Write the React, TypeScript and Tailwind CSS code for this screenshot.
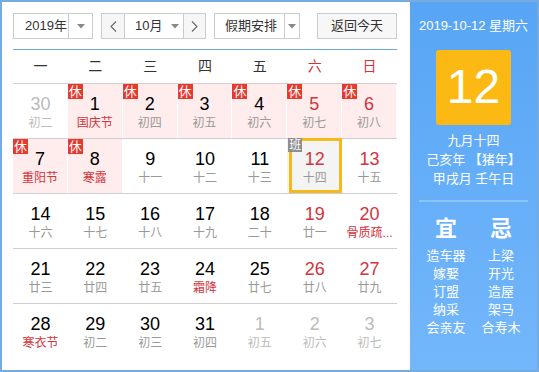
type Day = {
  d: number;
  l: string;
  out?: boolean;
  hol?: boolean;
  fest?: boolean;
  wk?: boolean;
  today?: boolean;
  ban?: boolean;
};

const weeks: Day[][] = [
  [
    { d: 30, l: "初二", out: true },
    { d: 1, l: "国庆节", hol: true, fest: true },
    { d: 2, l: "初四", hol: true },
    { d: 3, l: "初五", hol: true },
    { d: 4, l: "初六", hol: true },
    { d: 5, l: "初七", hol: true, wk: true },
    { d: 6, l: "初八", hol: true, wk: true },
  ],
  [
    { d: 7, l: "重阳节", hol: true, fest: true },
    { d: 8, l: "寒露", hol: true, fest: true },
    { d: 9, l: "十一" },
    { d: 10, l: "十二" },
    { d: 11, l: "十三" },
    { d: 12, l: "十四", wk: true, today: true, ban: true },
    { d: 13, l: "十五", wk: true },
  ],
  [
    { d: 14, l: "十六" },
    { d: 15, l: "十七" },
    { d: 16, l: "十八" },
    { d: 17, l: "十九" },
    { d: 18, l: "二十" },
    { d: 19, l: "廿一", wk: true },
    { d: 20, l: "骨质疏...", wk: true, fest: true },
  ],
  [
    { d: 21, l: "廿三" },
    { d: 22, l: "廿四" },
    { d: 23, l: "廿五" },
    { d: 24, l: "霜降", fest: true },
    { d: 25, l: "廿七" },
    { d: 26, l: "廿八", wk: true },
    { d: 27, l: "廿九", wk: true },
  ],
  [
    { d: 28, l: "寒衣节", fest: true },
    { d: 29, l: "初二" },
    { d: 30, l: "初三" },
    { d: 31, l: "初四" },
    { d: 1, l: "初五", out: true },
    { d: 2, l: "初六", out: true },
    { d: 3, l: "初七", out: true },
  ],
];

const yi = ["造车器", "嫁娶", "订盟", "纳采", "会亲友"];
const ji = ["上梁", "开光", "造屋", "架马", "合寿木"];

function Caret() {
  return (
    <svg width="8" height="5" viewBox="0 0 8 5">
      <path d="M0 0h8L4 4.5z" fill="#888" />
    </svg>
  );
}

function Chevron({ left }: { left?: boolean }) {
  return (
    <svg width="7" height="11" viewBox="0 0 7 11">
      <path
        d={left ? "M6 0.5L1 5.5l5 5" : "M1 0.5l5 5-5 5"}
        fill="none"
        stroke="#666"
        strokeWidth="1.1"
      />
    </svg>
  );
}

function Cell({ day }: { day: Day }) {
  const numColor = day.out ? "text-[#bbb]" : day.wk ? "text-[#d2343d]" : "text-black";
  const lunarColor = day.out ? "text-[#bbb]" : day.fest ? "text-[#d2343d]" : "text-[#999]";
  return (
    <div className="relative h-[54px]">
      <div
        className={`h-full flex flex-col items-center pt-[10px] ${
          day.hol ? "bg-[#ffecec] mr-px" : ""
        } ${day.today ? "bg-[#f4f4f4]" : ""}`}
      >
        <span className={`text-[18px] leading-[20px] ${numColor}`}>{day.d}</span>
        <span className={`text-[12px] leading-[16px] mt-px whitespace-nowrap ${lunarColor}`}>{day.l}</span>
      </div>
      {day.today && (
        <div className="absolute -top-px bottom-0 left-[2px] right-0 border-[3px] border-[#f6b91a]" />
      )}
      {day.hol && (
        <span className="absolute top-0 left-0 w-[15px] h-[15px] bg-[#e8392f] text-white text-[13px] leading-[15px] text-center">
          休
        </span>
      )}
      {day.ban && (
        <span className="absolute -top-px left-[1px] w-[14px] h-[14px] bg-[#8e8e8e] text-white text-[12px] leading-[14px] text-center">
          班
        </span>
      )}
    </div>
  );
}

export default function App() {
  return (
    <div className="w-[539px] h-[372px] border-2 border-[#76abe0] flex bg-white font-['Liberation_Sans','Noto_Sans_CJK_SC',sans-serif] text-[#333]">
      <div className="w-[408px] pl-[11px] pt-[11px]">
        <div className="flex h-[26px] text-[13px] w-[384px]">
          <div className="w-[80px] flex border border-[#ccc]">
            <span className="flex-1 pl-[11px] leading-[24px]">2019年</span>
            <span className="w-[24px] border-l border-[#ccc] flex items-center justify-center">
              <Caret />
            </span>
          </div>
          <div className="ml-[8px] w-[105px] flex border border-[#ccc]">
            <span className="w-[22px] bg-[#f6f6f6] flex items-center justify-center">
              <Chevron left />
            </span>
            <span className="w-[60px] border-x border-[#ccc] flex items-center pl-[10px] gap-[9px]">
              <span className="leading-[24px]">10月</span>
              <Caret />
            </span>
            <span className="flex-1 bg-[#f6f6f6] flex items-center justify-center">
              <Chevron />
            </span>
          </div>
          <div className="ml-[8px] w-[86px] flex border border-[#ccc]">
            <span className="flex-1 pl-[10px] leading-[24px] overflow-hidden whitespace-nowrap">假期安排</span>
            <span className="w-[15px] border-l border-[#ccc] flex items-center justify-center">
              <Caret />
            </span>
          </div>
          <div className="ml-auto w-[80px] border border-[#ccc] bg-[#f7f7f7] text-center leading-[24px]">
            返回今天
          </div>
        </div>

        <div className="w-[384px] mt-[10px] border-t border-[#6aa7dc]">
          <div className="grid grid-cols-7 h-[33px] items-center text-center text-[14px]">
            {["一", "二", "三", "四", "五", "六", "日"].map((w, i) => (
              <span key={w} className={i > 4 ? "text-[#d2343d]" : "text-[#333]"}>
                {w}
              </span>
            ))}
          </div>
          {weeks.map((row, r) => (
            <div key={r} className="grid grid-cols-7 border-t border-[#cfcfcf]">
              {row.map((day, i) => (
                <Cell key={i} day={day} />
              ))}
            </div>
          ))}
        </div>
      </div>

      <div className="w-[127px] bg-gradient-to-b from-[#57a5f5] to-[#73b7fb] text-white flex flex-col items-center pt-[14px]">
        <div className="text-[13px] leading-[20px]">2019-10-12 星期六</div>
        <div className="mt-[14px] w-[75px] h-[75px] rounded-[3px] bg-[#fdb913] flex items-center justify-center text-[48px] leading-none pb-[2px]">
          12
        </div>
        <div className="mt-[6px] text-[13px] leading-[19px] text-center">
          <div>九月十四</div>
          <div>己亥年 【猪年】</div>
          <div>甲戌月 壬午日</div>
        </div>
        <div className="mt-[12px] w-[109px] h-[2px] bg-[#8cc4f8]" />
        <div className="mt-[14px] flex text-center">
          <div className="w-[55px]">
            <div className="text-[22px] leading-[26px] font-bold">宜</div>
            <div className="mt-[5px] text-[13px] leading-[18px]">
              {yi.map((t) => (
                <div key={t}>{t}</div>
              ))}
            </div>
          </div>
          <div className="w-[55px]">
            <div className="text-[22px] leading-[26px] font-bold">忌</div>
            <div className="mt-[5px] text-[13px] leading-[18px]">
              {ji.map((t) => (
                <div key={t}>{t}</div>
              ))}
            </div>
          </div>
        </div>
      </div>
    </div>
  );
}
